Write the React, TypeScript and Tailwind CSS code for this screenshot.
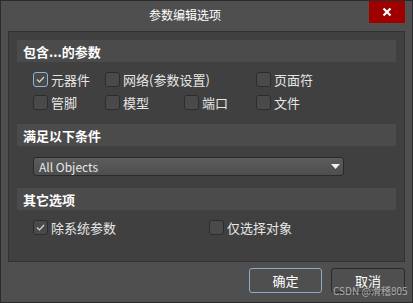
import React from "react";

const font = { fontFamily: '"Noto Sans CJK SC", "Noto Sans", sans-serif' };

function Check({ checked, focus }: { checked?: boolean; focus?: boolean }) {
  return (
    <div
      className={
        "w-[15px] h-[15px] rounded-[3px] border flex items-center justify-center shrink-0 bg-[#4a4a4a] " +
        (focus ? "border-[#8fb2d8]" : "border-[#2c2c2c]")
      }
    >
      {checked && (
        <svg width="11" height="11" viewBox="0 0 11 11">
          <polyline points="2,5.5 4.5,8 9,3" fill="none" stroke="#d8d8d8" strokeWidth="1.2" />
        </svg>
      )}
    </div>
  );
}

function Item({ label, checked, focus }: { label: string; checked?: boolean; focus?: boolean }) {
  return (
    <div className="flex items-center gap-[3px]">
      <Check checked={checked} focus={focus} />
      <span className="text-[13px] leading-none text-[#e6e6e6] whitespace-nowrap">{label}</span>
    </div>
  );
}

function Header({ text }: { text: string }) {
  return (
    <div className="h-[22px] bg-[#4b4b4b] flex items-center pl-[6px]">
      <span className="text-[13px] font-bold text-white leading-none">{text}</span>
    </div>
  );
}

export default function App() {
  return (
    <div
      style={font}
      className="relative w-[413px] h-[303px] bg-[#4f4f4f] border border-[#2b2b2b] flex flex-col"
    >
      <div className="h-[30px] flex items-start shrink-0">
        <div className="w-[368px] h-[28px] flex items-center justify-center">
          <span className="text-[12px] text-white leading-none">参数编辑选项</span>
        </div>
        <div className="w-[36px] h-[22px] bg-[#9e0000] flex items-center justify-center">
          <svg width="10" height="10" viewBox="0 0 10 10">
            <path d="M1.5 1.5 L8.5 8.5 M8.5 1.5 L1.5 8.5" stroke="white" strokeWidth="2.2" />
          </svg>
        </div>
      </div>
      <div className="mx-[7px] h-[231px] border border-[#333333] bg-[#404040] px-[8px] pt-[8px] flex flex-col">
        <Header text="包含...的参数" />
        <div className="grid grid-cols-[72px_79px_72px_auto] pl-[16px] mt-[10px] gap-y-[8px]">
          <Item label="元器件" checked focus />
          <div className="col-span-2">
            <Item label="网络(参数设置)" />
          </div>
          <Item label="页面符" />
          <Item label="管脚" />
          <Item label="模型" />
          <Item label="端口" />
          <Item label="文件" />
        </div>
        <div className="mt-[14px]">
          <Header text="满足以下条件" />
        </div>
        <div className="ml-[16px] mt-[11px] w-[311px] h-[19px] rounded-[3px] border border-[#2a2a2a] bg-gradient-to-b from-[#5c5c5c] to-[#4e4e4e] flex items-center justify-between pl-[5px] pr-[3px]">
          <span className="text-[12px] leading-none text-[#e8e8e8]">All Objects</span>
          <svg width="9" height="5" viewBox="0 0 9 5">
            <polygon points="0,0 9,0 4.5,5" fill="#f0f0f0" />
          </svg>
        </div>
        <div className="mt-[12px]">
          <Header text="其它选项" />
        </div>
        <div className="flex pl-[16px] mt-[10px]">
          <div className="w-[176px]">
            <Item label="除系统参数" checked />
          </div>
          <Item label="仅选择对象" />
        </div>
      </div>
      <div className="flex justify-end gap-[9px] pr-[7px] mt-[6px]">
        <button className="w-[73px] h-[25px] rounded-[3px] border border-[#8aaac8] bg-[#4f4f4f] text-[13px] text-white">
          确定
        </button>
        <button className="w-[74px] h-[25px] rounded-[3px] border border-[#2a2a2a] bg-[#4f4f4f] text-[13px] text-white">
          取消
        </button>
      </div>
      <span className="absolute left-[332px] top-[285px] text-[10px] leading-none text-[#c8c8c8]/80 whitespace-nowrap">
        CSDN @滑稽805
      </span>
    </div>
  );
}
